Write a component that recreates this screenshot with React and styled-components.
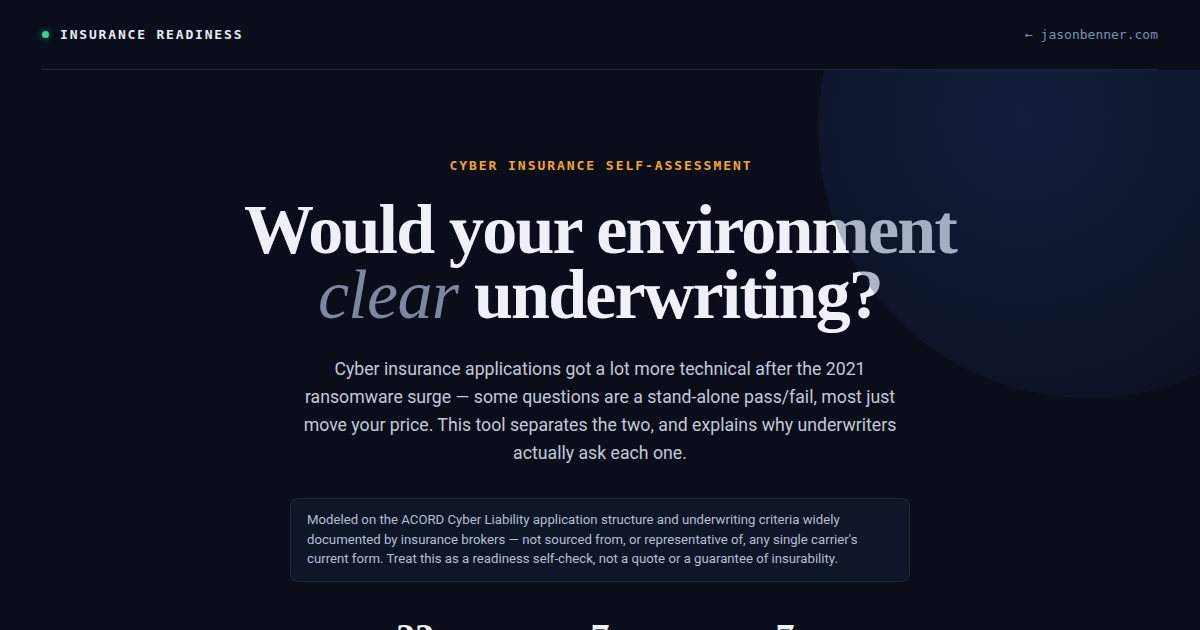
import React from 'react'
import styled, { createGlobalStyle } from 'styled-components'

const GlobalStyle = createGlobalStyle`
  html, body {
    margin: 0;
    padding: 0;
    background: #0a0e1a;
  }
  body {
    font-family: "Roboto", "Liberation Sans", sans-serif;
  }
  * { box-sizing: border-box; }
`

const Page = styled.div`
  position: relative;
  width: 1200px;
  height: 630px;
  overflow: hidden;
  background: #0a0e1a;
`

const Header = styled.header`
  position: relative;
  z-index: 3;
  padding: 0 42px;
  background: #0a0e1a;
`

const HeaderBar = styled.div`
  height: 70px;
  display: flex;
  align-items: center;
  justify-content: space-between;
  border-bottom: 1px solid #1f2739;
`

const Brand = styled.div`
  display: flex;
  align-items: center;
  gap: 11px;
`

const Dot = styled.span`
  width: 7px;
  height: 7px;
  border-radius: 50%;
  background: #34d399;
  box-shadow: 0 0 6px rgba(52, 211, 153, 0.6);
`

const Mono = styled.span`
  font-family: "DejaVu Sans Mono", "Liberation Mono", monospace;
  font-size: 13px;
  font-weight: ${(p) => (p.bold ? 700 : 400)};
  letter-spacing: ${(p) => p.spacing || '0'};
  color: ${(p) => p.color || '#e8ecf5'};
`

const BackLink = styled.a`
  font-family: "DejaVu Sans Mono", "Liberation Mono", monospace;
  font-size: 13px;
  color: #7f8db3;
  text-decoration: none;
`

const Hero = styled.main`
  position: relative;
  display: flex;
  flex-direction: column;
  align-items: center;
  padding-top: 88px;
`

const Glow = styled.div`
  position: absolute;
  z-index: 2;
  left: 818px;
  top: -212px;
  width: 540px;
  height: 540px;
  border-radius: 50%;
  pointer-events: none;
  background: radial-gradient(
    circle at 38% 48%,
    rgba(32, 52, 104, 0.42) 0%,
    rgba(26, 42, 90, 0.34) 35%,
    rgba(18, 30, 66, 0.24) 70%,
    rgba(14, 22, 50, 0.18) 100%
  );
`

const Eyebrow = styled(Mono)`
  color: #f5a524;
  font-weight: 700;
  letter-spacing: 0.15em;
  margin-left: 0.15em;
`

const Title = styled.h1`
  margin: 24px 0 0;
  font-family: "Liberation Serif", "DejaVu Serif", serif;
  font-weight: 700;
  font-size: 70px;
  line-height: 65px;
  letter-spacing: -0.026em;
  text-align: center;
  color: #eef2f8;
`

const Soft = styled.em`
  font-weight: 400;
  font-style: italic;
  letter-spacing: -0.01em;
  color: #7d879f;
`

const Lead = styled.p`
  margin: 28px 0 0;
  width: 610px;
  font-size: 17.7px;
  line-height: 28px;
  text-align: center;
  color: #c2c9db;
`

const Note = styled.div`
  margin-top: 31px;
  width: 620px;
  padding: 11px 16px 12px;
  border: 1px solid #1f2a40;
  border-radius: 8px;
  background: #0f1628;
  font-size: 13.2px;
  line-height: 19.5px;
  color: #b6bfd2;
`

const Stats = styled.div`
  margin-top: 35px;
  display: grid;
  grid-template-columns: repeat(3, 185px);
`

const Stat = styled.div`
  display: flex;
  flex-direction: column;
  align-items: center;
`

const StatNum = styled.div`
  font-family: "Liberation Serif", "DejaVu Serif", serif;
  font-weight: 700;
  font-size: 38px;
  line-height: 40px;
  color: #eef2f8;
`

const StatLabel = styled.div`
  font-family: "DejaVu Sans Mono", monospace;
  font-size: 11px;
  color: #7f8db3;
  letter-spacing: 0.1em;
`

const stats = [
  { n: '22', label: 'QUESTIONS' },
  { n: '7', label: 'HARD STOPS' },
  { n: '7', label: 'CATEGORIES' },
]

export default function App() {
  return (
    <Page>
      <GlobalStyle />
      <Header>
        <HeaderBar>
          <Brand>
            <Dot />
            <Mono bold spacing="0.14em">INSURANCE READINESS</Mono>
          </Brand>
          <BackLink href="#">← jasonbenner.com</BackLink>
        </HeaderBar>
      </Header>
      <Hero>
        <Glow />
        <Eyebrow>CYBER INSURANCE SELF-ASSESSMENT</Eyebrow>
        <Title>
          Would your environment
          <br />
          <Soft>clear</Soft> underwriting?
        </Title>
        <Lead>
          Cyber insurance applications got a lot more technical after the 2021
          ransomware surge — some questions are a stand-alone pass/fail, most just
          move your price. This tool separates the two, and explains why underwriters
          actually ask each one.
        </Lead>
        <Note>
          Modeled on the ACORD Cyber Liability application structure and underwriting
          criteria widely documented by insurance brokers — not sourced from, or
          representative of, any single carrier's current form. Treat this as a
          readiness self-check, not a quote or a guarantee of insurability.
        </Note>
        <Stats>
          {stats.map((s, i) => (
            <Stat key={i}>
              <StatNum>{s.n}</StatNum>
              <StatLabel>{s.label}</StatLabel>
            </Stat>
          ))}
        </Stats>
      </Hero>
    </Page>
  )
}
